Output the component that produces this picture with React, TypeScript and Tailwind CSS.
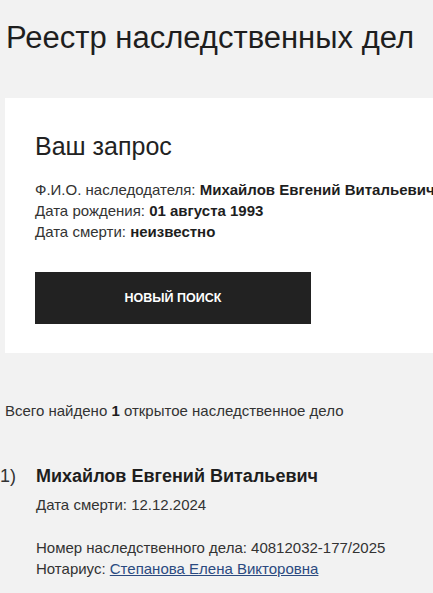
export default function App() {
  return (
    <div className="min-h-[593px] w-[433px] overflow-hidden bg-[#f2f2f2] text-[#222] font-['Liberation_Sans',Arial,sans-serif]">
      <h1 className="pl-[6px] pt-[20px] text-[31px] leading-[36px] font-normal text-[#1e1e1e] whitespace-nowrap">Реестр наследственных дел</h1>

      {/* request card */}
      <div className="ml-[5px] mt-[42px] w-[480px] bg-white pl-[30px] pt-[33px] pb-[29px]">
        <h2 className="text-[25px] leading-[30px] text-[#222]">Ваш запрос</h2>
        <div className="mt-[18px] text-[15px] leading-[21px] whitespace-nowrap text-[#333]">
          <div>Ф.И.О. наследодателя: <b className="text-[#1e1e1e]">Михайлов Евгений Витальевич</b></div>
          <div>Дата рождения: <b className="text-[#1e1e1e]">01 августа 1993</b></div>
          <div>Дата смерти: <b className="text-[#1e1e1e]">неизвестно</b></div>
        </div>
        <button className="mt-[30px] flex h-[52px] w-[276px] items-center justify-center bg-[#222] text-[12.5px] font-bold uppercase text-white">
          Новый поиск
        </button>
      </div>

      <p className="mt-[48px] pl-[5px] text-[15px] leading-[20px] text-[#333]">
        Всего найдено <b className="text-[#1e1e1e]">1</b> открытое наследственное дело
      </p>

      {/* result */}
      <div className="mt-[43px] flex">
        <span className="w-[36px] text-[18px] leading-[24px] text-[#333]">1)</span>
        <div className="text-[15px] text-[#333]">
          <div className="text-[18px] leading-[24px] font-bold text-[#1e1e1e]">Михайлов Евгений Витальевич</div>
          <div className="mt-[7px] leading-[20px]">Дата смерти: 12.12.2024</div>
          <div className="mt-[22px] leading-[21px]">Номер наследственного дела: 40812032-177/2025</div>
          <div className="leading-[21px]">
            Нотариус: <a href="#" className="text-[#2b4a80] underline">Степанова Елена Викторовна</a>
          </div>
        </div>
      </div>
    </div>
  );
}
